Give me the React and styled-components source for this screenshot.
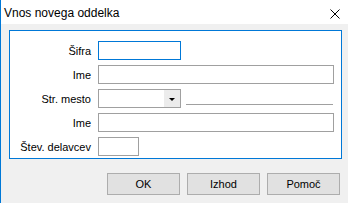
import React from "react"
import styled, { createGlobalStyle } from "styled-components"

const GlobalStyle = createGlobalStyle`
  html, body {
    margin: 0;
    padding: 0;
    background: #f0f0f0;
  }
  body {
    font-family: "Liberation Sans", Arial, sans-serif;
  }
`

const Window = styled("div")`
  width: 347px;
  height: 203px;
  border-left: 1px solid #0078d7;
  background: #f0f0f0;
  display: flex;
  flex-direction: column;
  overflow: hidden;
`

const TitleBar = styled("div")`
  height: 24px;
  background: #ffffff;
  display: flex;
  align-items: center;
  justify-content: space-between;
  padding: 0 8px 0 3px;
`

const Title = styled("span")`
  font-size: 12px;
  color: #000;
  margin-top: 1px;
`

const CloseIcon = styled("svg")`
  width: 10px;
  height: 10px;
  margin-top: 3px;
`

const Body = styled("div")`
  flex: 1;
  padding: 6px 6px 0 8px;
  display: flex;
  flex-direction: column;
`

const Panel = styled("div")`
  height: 117px;
  background: #ffffff;
  border: 1px solid #0078d7;
  padding: 10px 0 0 0;
  box-sizing: content-box;
  display: grid;
  grid-template-columns: 81px 1fr;
  grid-auto-rows: 19px;
  row-gap: 5px;
  column-gap: 7px;
`

const Label = styled("label")`
  font-size: 11px;
  color: #000;
  text-align: right;
  align-self: center;
  white-space: nowrap;
`

const Field = styled("div")`
  display: flex;
  align-items: stretch;
  gap: 5px;
`

const Input = styled("div")`
  width: ${(p) => p.$w}px;
  height: 19px;
  box-sizing: border-box;
  border: 1px solid ${(p) => (p.$focus ? "#0078d7" : "#a0a0a0")};
  background: #fff;
`

const Combo = styled("div")`
  width: 83px;
  height: 19px;
  box-sizing: border-box;
  border: 1px solid #a0a0a0;
  background: #fff;
  display: flex;
  justify-content: flex-end;
`

const ComboButton = styled("div")`
  width: 16px;
  background: #ececec;
  display: flex;
  align-items: center;
  justify-content: center;
`

const Arrow = styled("div")`
  width: 0;
  height: 0;
  border-left: 3px solid transparent;
  border-right: 3px solid transparent;
  border-top: 3px solid #000;
  margin-top: 1px;
`

const Rule = styled("div")`
  width: 147px;
  height: 1px;
  background: #a0a0a0;
  align-self: flex-end;
  margin-bottom: 3px;
`

const ButtonRow = styled("div")`
  display: flex;
  justify-content: flex-end;
  gap: 7px;
  margin-top: 14px;
  padding-right: 2px;
`

const Button = styled("button")`
  width: 73px;
  height: 22px;
  box-sizing: border-box;
  border: 1px solid #adadad;
  background: #e1e1e1;
  font-family: "Liberation Sans", Arial, sans-serif;
  font-size: 11px;
  color: #000;
  padding: 0;
`

export default function App() {
  return (
    <>
      <GlobalStyle />
      <Window>
        <TitleBar>
          <Title>Vnos novega oddelka</Title>
          <CloseIcon viewBox="0 0 10 10">
            <path d="M0.5 0.5 L9.5 9.5 M9.5 0.5 L0.5 9.5" stroke="#000" strokeWidth="1" />
          </CloseIcon>
        </TitleBar>
        <Body>
          <Panel>
            <Label>Šifra</Label>
            <Field>
              <Input $w={83} $focus />
            </Field>
            <Label>Ime</Label>
            <Field>
              <Input $w={236} />
            </Field>
            <Label>Str. mesto</Label>
            <Field>
              <Combo>
                <ComboButton>
                  <Arrow />
                </ComboButton>
              </Combo>
              <Rule />
            </Field>
            <Label>Ime</Label>
            <Field>
              <Input $w={236} />
            </Field>
            <Label>Štev. delavcev</Label>
            <Field>
              <Input $w={41} />
            </Field>
          </Panel>
          <ButtonRow>
            <Button>OK</Button>
            <Button>Izhod</Button>
            <Button>Pomoč</Button>
          </ButtonRow>
        </Body>
      </Window>
    </>
  )
}
